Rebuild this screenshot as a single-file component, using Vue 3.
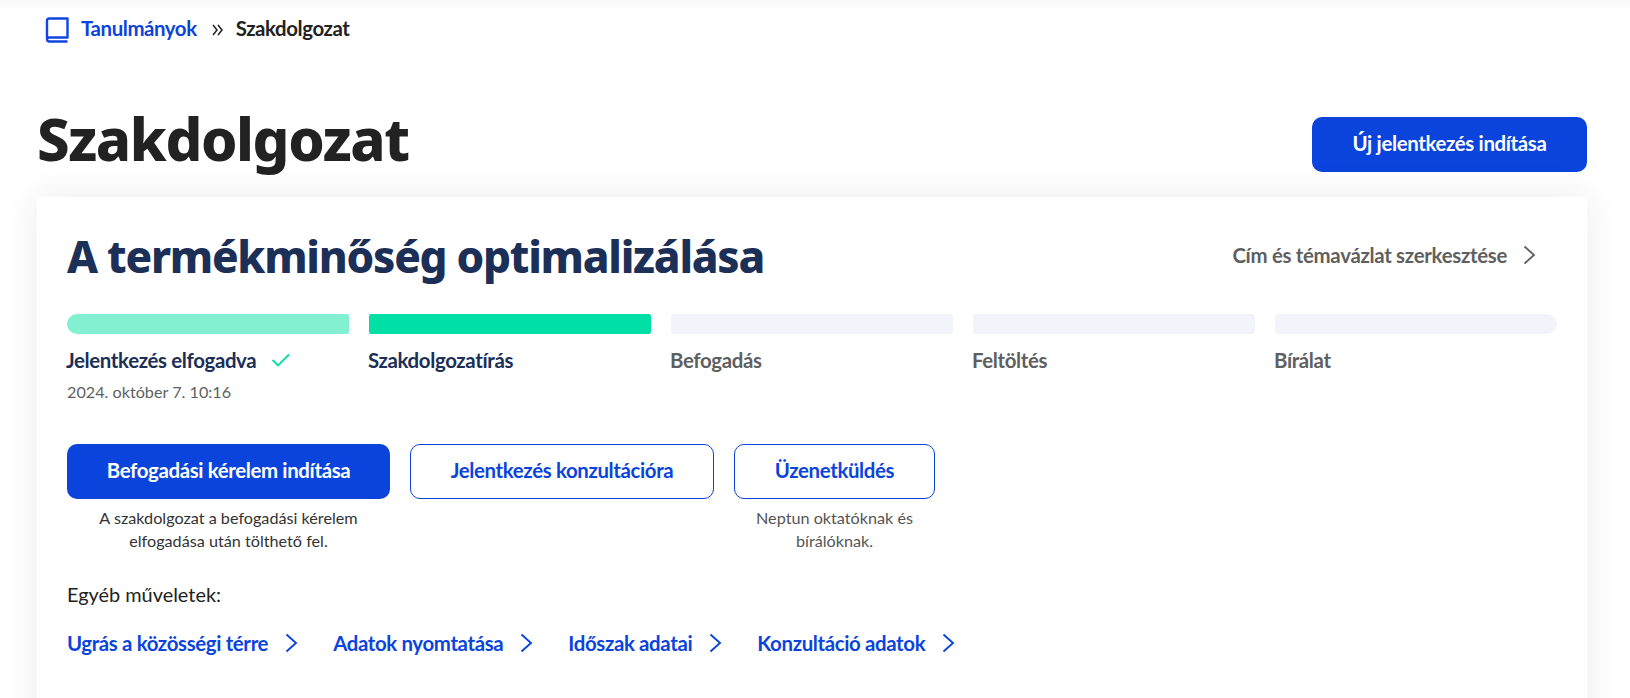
<script setup>
const steps = [
  { label: 'Jelentkezés elfogadva', state: 'done', date: '2024. október 7. 10:16' },
  { label: 'Szakdolgozatírás', state: 'active' },
  { label: 'Befogadás', state: 'todo' },
  { label: 'Feltöltés', state: 'todo' },
  { label: 'Bírálat', state: 'todo' },
]
const links = ['Ugrás a közösségi térre', 'Adatok nyomtatása', 'Időszak adatai', 'Konzultáció adatok']
</script>

<template>
  <div class="page">
    <div class="topshade"></div>
    <nav class="crumbs">
      <svg class="book" width="24" height="26" viewBox="0 0 24 26" fill="none" stroke="#1244e2" stroke-width="2.4">
        <path d="M2 21V3.5A2 2 0 0 1 4 1.5H22.5V20.5H4A2.2 2.2 0 0 0 2 22.6A2.2 2.2 0 0 0 4 24.5H22.5" stroke-linejoin="round" />
      </svg>
      <a class="crumb-link">Tanulmányok</a>
      <svg class="crumb-sep" width="11" height="12" viewBox="0 0 11 12" fill="none" stroke="#222" stroke-width="1.5"><path d="M1 1L5 6L1 11M6 1L10 6L6 11" /></svg>
      <span class="crumb-cur">Szakdolgozat</span>
    </nav>
    <header class="head">
      <h1>Szakdolgozat</h1>
      <button class="btn primary new">Új jelentkezés indítása</button>
    </header>
    <section class="card">
      <div class="card-head">
        <h2>A termékminőség optimalizálása</h2>
        <a class="edit">Cím és témavázlat szerkesztése
          <svg width="13" height="20" viewBox="0 0 13 20" fill="none" stroke="#5f5f5f" stroke-width="1.8"><path d="M1.5 1.5L11 10L1.5 18.5" /></svg>
        </a>
      </div>
      <div class="steps">
        <div v-for="s in steps" :key="s.label" class="step" :class="s.state">
          <div class="bar"></div>
          <div class="label">{{ s.label }}
            <svg v-if="s.state === 'done'" width="20" height="16" viewBox="0 0 20 16" fill="none" stroke="#00dfa5" stroke-width="1.8"><path d="M1.5 8L7 13.5L18 2.5" /></svg>
          </div>
          <div v-if="s.date" class="date">{{ s.date }}</div>
        </div>
      </div>
      <div class="actions">
        <div class="action a1">
          <button class="btn primary">Befogadási kérelem indítása</button>
          <p>A szakdolgozat a befogadási kérelem elfogadása után tölthető fel.</p>
        </div>
        <div class="action a2">
          <button class="btn outline">Jelentkezés konzultációra</button>
        </div>
        <div class="action a3">
          <button class="btn outline">Üzenetküldés</button>
          <p class="grey">Neptun oktatóknak és bírálóknak.</p>
        </div>
      </div>
      <div class="other">Egyéb műveletek:</div>
      <div class="links">
        <a v-for="l in links" :key="l" class="link">{{ l }}
          <svg width="13" height="20" viewBox="0 0 13 20" fill="none" stroke="#0b44dd" stroke-width="1.9"><path d="M1.5 1.5L11 10L1.5 18.5" /></svg>
        </a>
      </div>
    </section>
  </div>
</template>

<style>
html, body { margin: 0; background: #fff; overflow: hidden; }
</style>

<style scoped>
.page {
  position: relative;
  height: 698px;
  overflow: hidden;
  box-sizing: border-box;
  padding: 0 43px 0 37px;
  font-family: Lato, "Liberation Sans", sans-serif;
  color: #222;
}
.topshade {
  position: absolute;
  left: 0; right: 0; top: 0;
  height: 10px;
  background: linear-gradient(#f8f8f8, #fff);
}
.crumbs {
  display: flex;
  align-items: center;
  height: 28px;
  padding: 15px 0 0 8px;
  font-size: 20.4px;
  position: relative;
}
.book { margin: 1px 12px 0 0; }
.crumb-link { color: #0b44dd; font-weight: 700; letter-spacing: -0.4px; margin-top: -3px; }
.crumb-sep { margin: 1px 13px 0 15px; }
.crumb-cur { font-weight: 700; letter-spacing: -0.4px; color: #222; margin-top: -3px; }
.head {
  display: flex;
  justify-content: space-between;
  align-items: flex-start;
  padding-top: 74px;
  height: 80px;
}
h1 {
  margin: -12px 0 0;
  font-family: "Noto Sans", sans-serif;
  font-weight: 800;
  font-size: 58px;
  line-height: 68px;
  letter-spacing: -1.4px;
  color: #222;
}
.btn {
  box-sizing: border-box;
  height: 55px;
  border-radius: 10px;
  font-family: Lato, sans-serif;
  font-size: 20.4px;
  font-weight: 700;
  letter-spacing: -0.35px;
  padding: 0 0 3px;
  cursor: pointer;
}
.primary { background: #0b44dd; color: #fff; border: 0; }
.outline { background: #fff; color: #0b44dd; border: 1.5px solid #0b44dd; }
.new { width: 275px; }
.card {
  height: 520px;
  padding: 32px 30px 0;
  background: #fff;
  box-shadow: 0 0 36px rgba(0, 0, 0, 0.08);
  position: relative;
}
.card-head {
  display: flex;
  justify-content: space-between;
  align-items: center;
  height: 54px;
  padding-right: 21px;
}
h2 {
  margin: 0;
  font-family: "Noto Sans", sans-serif;
  font-weight: 800;
  font-size: 44px;
  line-height: 54px;
  letter-spacing: -1.25px;
  color: #1c2f57;
}
.edit {
  display: flex;
  align-items: center;
  gap: 16px;
  margin-top: -3px;
  font-size: 20.4px;
  font-weight: 700;
  letter-spacing: -0.3px;
  color: #5f5f5f;
}
.steps {
  display: grid;
  grid-template-columns: repeat(5, 1fr);
  gap: 20px;
  margin-top: 31px;
  height: 130px;
}
.bar { height: 20px; background: #f2f3fb; border-radius: 2px; }
.done .bar { background: #84f0d2; border-radius: 10px 2px 2px 10px; }
.active .bar { background: #00dfa5; }
.step:last-child .bar { border-radius: 2px 10px 10px 2px; }
.label {
  display: flex;
  align-items: center;
  gap: 15px;
  margin-top: 13px;
  height: 26px;
  font-size: 20.4px;
  font-weight: 700;
  letter-spacing: -0.35px;
  margin-left: -1px;
  color: #5f5f5f;
}
.done .label, .active .label { color: #1c2f57; }
.date { margin-top: 7px; font-size: 16.2px; line-height: 24px; color: #5f5f5f; }
.actions { display: flex; gap: 20px; }
.action { display: flex; flex-direction: column; }
.action .btn { width: 100%; }
.a1 { width: 323px; }
.a2 { width: 304px; }
.a3 { width: 201px; }
.action p {
  margin: 8px 0 0;
  text-align: center;
  font-size: 16.2px;
  line-height: 22.5px;
  color: #333;
}
.a1 p { padding: 0 20px; }
.action p.grey { color: #555; padding: 0 10px; }
.other { margin-top: 29px; font-size: 19.9px; line-height: 26px; color: #222; }
.links { display: flex; gap: 35px; margin-top: 24px; }
.link {
  display: flex;
  align-items: center;
  gap: 17px;
  font-size: 20.4px;
  font-weight: 700;
  letter-spacing: -0.35px;
  color: #0b44dd;
}
</style>
